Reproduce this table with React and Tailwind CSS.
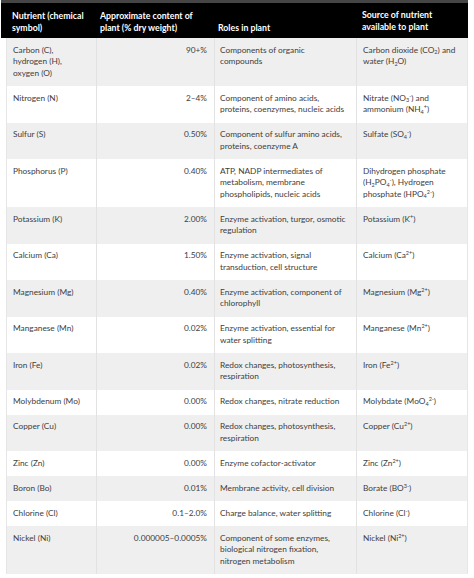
import React from 'react'

const Sub = ({ children }) => <sub className="text-[5.5px] -bottom-[1.5px]">{children}</sub>
const Sup = ({ children }) => <sup className="text-[5.5px] -top-[3px]">{children}</sup>

const rows = [
  {
    name: 'Carbon (C),\nhydrogen (H),\noxygen (O)',
    amount: '90+%',
    roles: 'Components of organic\ncompounds',
    source: (
      <>
        Carbon dioxide (CO<Sub>2</Sub>) and
        <br />
        water (H<Sub>2</Sub>O)
      </>
    ),
  },
  {
    name: 'Nitrogen (N)',
    amount: '2–4%',
    roles: 'Component of amino acids,\nproteins, coenzymes, nucleic acids',
    source: (
      <>
        Nitrate (NO<Sub>3</Sub>
        <Sup>-</Sup>) and
        <br />
        ammonium (NH<Sub>4</Sub>
        <Sup>+</Sup>)
      </>
    ),
  },
  {
    name: 'Sulfur (S)',
    amount: '0.50%',
    roles: 'Component of sulfur amino acids,\nproteins, coenzyme A',
    source: (
      <>
        Sulfate (SO<Sub>4</Sub>
        <Sup>-</Sup>)
      </>
    ),
  },
  {
    name: 'Phosphorus (P)',
    amount: '0.40%',
    roles: 'ATP, NADP intermediates of\nmetabolism, membrane\nphospholipids, nucleic acids',
    source: (
      <>
        Dihydrogen phosphate
        <br />
        (H<Sub>2</Sub>PO<Sub>4</Sub>
        <Sup>-</Sup>), Hydrogen
        <br />
        phosphate (HPO<Sub>4</Sub>
        <Sup>2-</Sup>)
      </>
    ),
  },
  {
    name: 'Potassium (K)',
    amount: '2.00%',
    roles: 'Enzyme activation, turgor, osmotic\nregulation',
    source: (
      <>
        Potassium (K<Sup>+</Sup>)
      </>
    ),
  },
  {
    name: 'Calcium (Ca)',
    amount: '1.50%',
    roles: 'Enzyme activation, signal\ntransduction, cell structure',
    source: (
      <>
        Calcium (Ca<Sup>2+</Sup>)
      </>
    ),
  },
  {
    name: 'Magnesium (Mg)',
    amount: '0.40%',
    roles: 'Enzyme activation, component of\nchlorophyll',
    source: (
      <>
        Magnesium (Mg<Sup>2+</Sup>)
      </>
    ),
  },
  {
    name: 'Manganese (Mn)',
    amount: '0.02%',
    roles: 'Enzyme activation, essential for\nwater splitting',
    source: (
      <>
        Manganese (Mn<Sup>2+</Sup>)
      </>
    ),
  },
  {
    name: 'Iron (Fe)',
    amount: '0.02%',
    roles: 'Redox changes, photosynthesis,\nrespiration',
    source: (
      <>
        Iron (Fe<Sup>2+</Sup>)
      </>
    ),
  },
  {
    name: 'Molybdenum (Mo)',
    amount: '0.00%',
    roles: 'Redox changes, nitrate reduction',
    source: (
      <>
        Molybdate (MoO<Sub>4</Sub>
        <Sup>2-</Sup>)
      </>
    ),
  },
  {
    name: 'Copper (Cu)',
    amount: '0.00%',
    roles: 'Redox changes, photosynthesis,\nrespiration',
    source: (
      <>
        Copper (Cu<Sup>2+</Sup>)
      </>
    ),
  },
  {
    name: 'Zinc (Zn)',
    amount: '0.00%',
    roles: 'Enzyme cofactor-activator',
    source: (
      <>
        Zinc (Zn<Sup>2+</Sup>)
      </>
    ),
  },
  {
    name: 'Boron (Bo)',
    amount: '0.01%',
    roles: 'Membrane activity, cell division',
    source: (
      <>
        Borate (BO<Sup>3-</Sup>)
      </>
    ),
  },
  {
    name: 'Chlorine (Cl)',
    amount: '0.1–2.0%',
    roles: 'Charge balance, water splitting',
    source: (
      <>
        Chlorine (Cl<Sup>-</Sup>)
      </>
    ),
  },
  {
    name: 'Nickel (Ni)',
    amount: '0.000005–0.0005%',
    roles: 'Component of some enzymes,\nbiological nitrogen fixation,\nnitrogen metabolism',
    source: (
      <>
        Nickel (Ni<Sup>2+</Sup>)
      </>
    ),
  },
]

export default function App() {
  return (
    <div className="w-[474px] h-[578px] bg-white font-['Lato',sans-serif] leading-[11.5px]">
      {/* Header */}
      <div className="ml-[1px] w-[467px] bg-black border-t-[3px] border-[#454545] grid grid-cols-[94px_118px_142px_113px] items-end text-[8.75px] font-bold text-white whitespace-pre">
        <div className="pl-[11px] pr-[6px] pt-[6px] pb-[5px]">{'Nutrient (chemical\nsymbol)'}</div>
        <div className="px-[5px] pt-[6px] pb-[5px]">{'Approximate content of\nplant (% dry weight)'}</div>
        <div className="px-[5px] pt-[6px] pb-[5px]">Roles in plant</div>
        <div className="px-[7px] pt-[6px] pb-[6px]">{'Source of nutrient\navailable to plant'}</div>
      </div>

      {/* Body */}
      <div className="ml-[6px] w-[462px] text-[8.3px] text-[#404040]">
        {rows.map((r, i) => (
          <div
            key={r.name}
            className={`grid grid-cols-[89px_118px_142px_113px] border-x border-[#e6e6e6] ${
              i % 2 === 0 ? 'bg-[#efefef]' : 'bg-white'
            }`}
          >
            <div className="px-[6px] py-[6.75px] whitespace-pre">{r.name}</div>
            <div className="pl-[6px] pr-[7px] py-[6.75px] text-right border-l border-[#e2e2e2]">{r.amount}</div>
            <div className="px-[5px] py-[6.75px] whitespace-pre border-l border-[#e2e2e2]">{r.roles}</div>
            <div className="px-[6px] py-[6.75px] whitespace-nowrap border-l border-[#e2e2e2]">{r.source}</div>
          </div>
        ))}
      </div>
    </div>
  )
}
